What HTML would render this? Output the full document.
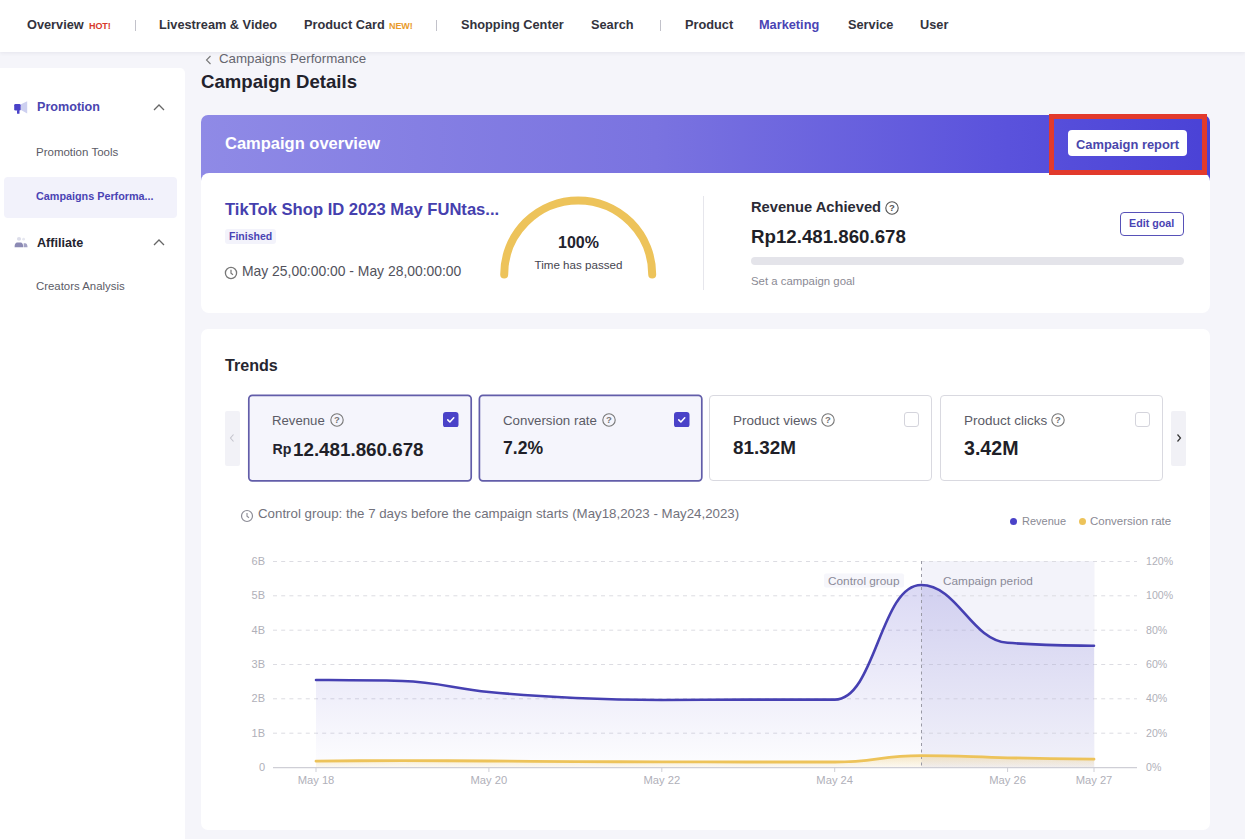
<!DOCTYPE html>
<html>
<head>
<meta charset="utf-8">
<title>Campaign Details</title>
<style>
*{box-sizing:border-box;margin:0;padding:0}
html,body{width:1245px;height:839px;overflow:hidden}
body{background:#f5f5fa;font-family:"Liberation Sans",sans-serif;color:#23232e;position:relative}
.t{position:absolute;white-space:nowrap;line-height:1}
.b{font-weight:700}
.abs{position:absolute}
/* nav */
#nav{position:absolute;left:0;top:0;width:1245px;height:52px;background:#fff;box-shadow:0 1px 4px rgba(40,40,80,.08)}
#nav .t{font-size:12.75px;font-weight:700;color:#33333d;top:19px}
#nav .sep{position:absolute;top:20px;width:1px;height:11px;background:#c2c2ca}
#nav .tag{font-size:9px;top:22px;letter-spacing:-.1px}
/* sidebar */
#side{position:absolute;left:0;top:68px;width:185px;height:771px;background:#fff;border-top-right-radius:5px}
/* cards */
.card{position:absolute;background:#fff;border-radius:7px}
</style>
</head>
<body>

<!-- NAV -->
<div id="nav">
  <div class="t" style="left:27px">Overview</div>
  <div class="t tag" style="left:89px;color:#d8392b">HOT!</div>
  <div class="sep" style="left:135px"></div>
  <div class="t" style="left:159px">Livestream &amp; Video</div>
  <div class="t" style="left:304px">Product Card</div>
  <div class="t tag" style="left:389px;color:#e89a2c">NEW!</div>
  <div class="sep" style="left:436px"></div>
  <div class="t" style="left:461px">Shopping Center</div>
  <div class="t" style="left:591px">Search</div>
  <div class="sep" style="left:660px"></div>
  <div class="t" style="left:685px">Product</div>
  <div class="t" style="left:759px;color:#4a44b4">Marketing</div>
  <div class="t" style="left:848px">Service</div>
  <div class="t" style="left:920px">User</div>
</div>

<!-- SIDEBAR -->
<div id="side">
  <svg class="abs" style="left:14px;top:32.5px" width="14" height="14" viewBox="0 0 14 14">
    <rect x="0.2" y="3" width="6.5" height="6.5" rx="1.3" fill="#4a42c8"/><rect x="3" y="9" width="2.5" height="3.8" rx=".6" fill="#4a42c8"/>
    <path d="M7 3.2L13.2 0.2v12.4L7 9z" fill="#cdd0f0"/>
  </svg>
  <div class="t b" style="left:37px;top:33.4px;font-size:12.6px;color:#4a45b0">Promotion</div>
  <svg class="abs" style="left:153px;top:35.7px" width="12" height="7" viewBox="0 0 12 7"><path d="M1 6L6 1l5 5" fill="none" stroke="#666" stroke-width="1.3"/></svg>
  <div class="t" style="left:36px;top:78.5px;font-size:11.5px;color:#5b5b66">Promotion Tools</div>
  <div class="abs" style="left:4px;top:109px;width:173px;height:41px;background:#f2f2fb;border-radius:4px"></div>
  <div class="t b" style="left:36px;top:122.5px;font-size:10.8px;color:#4a44b4">Campaigns Performa...</div>
  <svg class="abs" style="left:14px;top:167.6px" width="14" height="14" viewBox="0 0 14 14">
    <ellipse cx="5" cy="2.9" rx="2.1" ry="1.8" fill="#dcddea"/><circle cx="9.6" cy="3.2" r="1.4" fill="#e6e7f0"/>
    <path d="M0.6 11.2c0-3 1-4.6 2.6-4.6h3.4c1.6 0 2.6 1.6 2.6 4.6z" fill="#8c8ab4"/>
    <path d="M9.7 11.2V7.3h1.4c1.5 0 2.4 1.3 2.4 3.9z" fill="#a3a2c4"/>
  </svg>
  <div class="t b" style="left:37px;top:169px;font-size:12.6px;color:#23232e">Affiliate</div>
  <svg class="abs" style="left:153px;top:171px" width="12" height="7" viewBox="0 0 12 7"><path d="M1 6L6 1l5 5" fill="none" stroke="#666" stroke-width="1.3"/></svg>
  <div class="t" style="left:36px;top:213px;font-size:11.4px;color:#5b5b66">Creators Analysis</div>
</div>

<!-- HEADER TEXT -->
<svg class="abs" style="left:205px;top:54.5px" width="7" height="10" viewBox="0 0 7 10"><path d="M5.5 1L1.5 5l4 4" fill="none" stroke="#777" stroke-width="1.1"/></svg>
<div class="t" style="left:219px;top:51.5px;font-size:13.3px;color:#66666f">Campaigns Performance</div>
<div class="t b" style="left:201px;top:73.3px;font-size:18.6px;color:#22222c">Campaign Details</div>

<!-- OVERVIEW CARD -->
<div class="abs" style="left:201px;top:114.5px;width:1009px;height:70px;border-radius:7px 7px 0 0;background:linear-gradient(90deg,#8f8ae6 0%,#7a73e0 45%,#5a52dc 80%,#4a42d6 100%)"></div>
<div class="t b" style="left:225px;top:134.5px;font-size:16.5px;color:#fff">Campaign overview</div>
<div class="card" style="left:201px;top:173px;width:1009px;height:140px;border-radius:8px"></div>
<div class="abs" style="left:1068px;top:130px;width:119px;height:26px;background:#fff;border-radius:4px"></div>
<div class="t b" style="left:1076px;top:138.8px;font-size:12.9px;color:#4a46ac">Campaign report</div>
<div class="abs" style="left:1049px;top:114px;width:158px;height:61px;border:5px solid #e23a2c"></div>

<div class="t b" style="left:225px;top:201.5px;font-size:16.6px;color:#4540ae">TikTok Shop ID 2023 May FUNtas...</div>
<div class="abs" style="left:224.6px;top:228.8px;width:51.6px;height:15px;background:#f3f3fb;border-radius:3px"></div>
<div class="t b" style="left:229px;top:231px;font-size:10.5px;color:#4a44b4">Finished</div>
<svg class="abs" style="left:224.4px;top:265.6px" width="14" height="14" viewBox="0 0 14 14"><circle cx="7" cy="7" r="5.6" fill="none" stroke="#777" stroke-width="1.3"/><path d="M7 3.8v3.4l2 1.5" fill="none" stroke="#777" stroke-width="1.2"/></svg>
<div class="t" style="left:242px;top:264.5px;font-size:13.9px;color:#52525c">May 25,00:00:00 - May 28,00:00:00</div>

<svg class="abs" style="left:496px;top:190px" width="166" height="96" viewBox="496 190 166 96"><path d="M504.2 274.5A74 74 0 0 1 652.2 274.5" fill="none" stroke="#edc35a" stroke-width="8" stroke-linecap="round"/></svg>
<div class="t b" style="left:538px;width:81px;text-align:center;top:234.5px;font-size:16px;color:#23232e">100%</div>
<div class="t" style="left:518px;width:121px;text-align:center;top:259px;font-size:11.6px;color:#45454f">Time has passed</div>

<div class="abs" style="left:703px;top:196px;width:1px;height:94px;background:#e6e6ec"></div>

<div class="t b" style="left:751px;top:199.5px;font-size:14.7px;color:#2b2b36">Revenue Achieved</div>
<svg class="abs" style="left:885px;top:201px" width="14" height="14" viewBox="0 0 14 14"><circle cx="7" cy="7" r="6.2" fill="none" stroke="#555" stroke-width="1.1"/><text x="7" y="10.4" text-anchor="middle" font-family="Liberation Sans" font-size="9.5" font-weight="700" fill="#555">?</text></svg>
<div class="t b" style="left:751px;top:227.5px;font-size:18.7px;color:#1f1f28">Rp12.481.860.678</div>
<div class="abs" style="left:1120px;top:211.5px;width:64px;height:24px;border:1.5px solid #5751b8;border-radius:4px;background:#fff"></div>
<div class="t b" style="left:1129px;top:218px;font-size:10.7px;color:#4a44b4">Edit goal</div>
<div class="abs" style="left:751px;top:257.3px;width:433px;height:7.6px;background:#e4e4ea;border-radius:4px"></div>
<div class="t" style="left:751px;top:276px;font-size:11.4px;color:#8a8a94">Set a campaign goal</div>

<!-- TRENDS CARD -->
<div class="card" style="left:201px;top:328.6px;width:1009px;height:501.5px"></div>
<div class="t b" style="left:225px;top:356.6px;font-size:16.1px;color:#262630">Trends</div>
<div class="abs" style="left:225px;top:410.5px;width:14.5px;height:55px;background:#f2f2f7;border-radius:2px"></div>
<svg class="abs" style="left:229px;top:433px" width="6" height="10" viewBox="0 0 6 10"><path d="M4.5 1.5L1.5 5l3 3.5" fill="none" stroke="#c4c4cc" stroke-width="1.1"/></svg>
<div class="abs" style="left:1171px;top:410.5px;width:15px;height:55px;background:#f1f1f6;border-radius:2px"></div>
<svg class="abs" style="left:1176px;top:433px" width="6" height="10" viewBox="0 0 6 10"><path d="M1.5 1.5L4.5 5l-3 3.5" fill="none" stroke="#333" stroke-width="1.2"/></svg>
<svg class="abs" style="left:246px;top:393px" width="228" height="91" viewBox="246 393 228 91"><rect x="248.8" y="395.4" width="222.4" height="85.4" rx="3.5" fill="#f5f5fc" stroke="#625da9" stroke-width="1.7"/></svg>
<svg class="abs" style="left:477px;top:393px" width="228" height="91" viewBox="477 393 228 91"><rect x="479.4" y="395.4" width="222.4" height="85.4" rx="3.5" fill="#f5f5fc" stroke="#625da9" stroke-width="1.7"/></svg>
<div class="abs" style="left:709px;top:395px;width:223px;height:86px;border:1px solid #d9d9e0;border-radius:4px;background:#fff"></div>
<div class="abs" style="left:940px;top:395px;width:223px;height:86px;border:1px solid #d9d9e0;border-radius:4px;background:#fff"></div>
<div class="t" style="left:272px;top:413.5px;font-size:13.2px;color:#5b5b66">Revenue</div><svg class="abs" style="left:330px;top:413px" width="14" height="14" viewBox="0 0 14 14"><circle cx="7" cy="7" r="6.2" fill="none" stroke="#777" stroke-width="1.1"/><text x="7" y="10.4" text-anchor="middle" font-family="Liberation Sans" font-size="9.5" font-weight="700" fill="#777">?</text></svg>
<div class="t" style="left:503px;top:413.5px;font-size:13.3px;color:#5b5b66">Conversion rate</div><svg class="abs" style="left:602px;top:413px" width="14" height="14" viewBox="0 0 14 14"><circle cx="7" cy="7" r="6.2" fill="none" stroke="#777" stroke-width="1.1"/><text x="7" y="10.4" text-anchor="middle" font-family="Liberation Sans" font-size="9.5" font-weight="700" fill="#777">?</text></svg>
<div class="t" style="left:733px;top:413.5px;font-size:13.5px;color:#5b5b66">Product views</div><svg class="abs" style="left:821px;top:413px" width="14" height="14" viewBox="0 0 14 14"><circle cx="7" cy="7" r="6.2" fill="none" stroke="#777" stroke-width="1.1"/><text x="7" y="10.4" text-anchor="middle" font-family="Liberation Sans" font-size="9.5" font-weight="700" fill="#777">?</text></svg>
<div class="t" style="left:964px;top:413.5px;font-size:13.5px;color:#5b5b66">Product clicks</div><svg class="abs" style="left:1051px;top:413px" width="14" height="14" viewBox="0 0 14 14"><circle cx="7" cy="7" r="6.2" fill="none" stroke="#777" stroke-width="1.1"/><text x="7" y="10.4" text-anchor="middle" font-family="Liberation Sans" font-size="9.5" font-weight="700" fill="#777">?</text></svg>
<svg class="abs" style="left:443.3px;top:411.5px" width="15.5" height="15.5" viewBox="0 0 16 16"><rect x="0" y="0" width="16" height="16" rx="3" fill="#4a42c8"/><path d="M4.9 8.1l2.2 2.2 4-4.4" fill="none" stroke="#fff" stroke-width="1.6" stroke-linecap="round" stroke-linejoin="round"/></svg><svg class="abs" style="left:674.3px;top:411.5px" width="15.5" height="15.5" viewBox="0 0 16 16"><rect x="0" y="0" width="16" height="16" rx="3" fill="#4a42c8"/><path d="M4.9 8.1l2.2 2.2 4-4.4" fill="none" stroke="#fff" stroke-width="1.6" stroke-linecap="round" stroke-linejoin="round"/></svg><div class="abs" style="left:904px;top:412px;width:15px;height:15px;border:1px solid #d4d4dc;border-radius:3px;background:#fff"></div><div class="abs" style="left:1135px;top:412px;width:15px;height:15px;border:1px solid #d4d4dc;border-radius:3px;background:#fff"></div>
<div class="t b" style="left:272.5px;top:441.6px;font-size:14.2px;color:#23232e">Rp</div>
<div class="t b" style="left:293px;top:440.7px;font-size:18.8px;color:#1f1f28">12.481.860.678</div>
<div class="t b" style="left:503px;top:440.3px;font-size:17.6px;color:#1f1f28">7.2%</div>
<div class="t b" style="left:733px;top:439px;font-size:18.9px;color:#1f1f28">81.32M</div>
<div class="t b" style="left:964px;top:439px;font-size:19.6px;color:#1f1f28">3.42M</div>
<svg class="abs" style="left:239.6px;top:508.6px" width="14" height="14" viewBox="0 0 14 14"><circle cx="7" cy="7" r="5.5" fill="none" stroke="#8c8c96" stroke-width="1.2"/><path d="M7 3.9v3.3l2 1.5" fill="none" stroke="#8c8c96" stroke-width="1.1"/></svg>
<div class="t" style="left:258px;top:506.5px;font-size:13.3px;color:#72727c">Control group: the 7 days before the campaign starts (May18,2023 - May24,2023)</div>
<div class="abs" style="left:1010.2px;top:517.5px;width:7px;height:7px;border-radius:50%;background:#4a42c8"></div>
<div class="t" style="left:1022px;top:515.5px;font-size:11px;color:#8a8a94">Revenue</div>
<div class="abs" style="left:1078.6px;top:517.5px;width:7px;height:7px;border-radius:50%;background:#edc35a"></div>
<div class="t" style="left:1090px;top:515.5px;font-size:11.5px;color:#8a8a94">Conversion rate</div>
<!-- CHART-START -->
<svg class="abs" style="left:201px;top:540px" width="1009" height="290" viewBox="201 540 1009 290" font-family="Liberation Sans, sans-serif">
<defs><linearGradient id="gp" x1="0" y1="0" x2="0" y2="1" gradientUnits="userSpaceOnUse" gradientTransform="translate(0,585) scale(1,182)"><stop offset="0" stop-color="#4a42c8" stop-opacity=".2"/><stop offset="1" stop-color="#4a42c8" stop-opacity="0.01"/></linearGradient>
<linearGradient id="gy" x1="0" y1="0" x2="0" y2="1"><stop offset="0" stop-color="#edc35a" stop-opacity=".35"/><stop offset="1" stop-color="#edc35a" stop-opacity=".08"/></linearGradient></defs>
<rect x="921.5" y="561" width="173" height="206" fill="#f3f3fa"/>
<path d="M273 561.5H1137" stroke="#dcdce2" stroke-width="1" stroke-dasharray="4 4.2" fill="none"/>
<path d="M273 595.8H1137" stroke="#dcdce2" stroke-width="1" stroke-dasharray="4 4.2" fill="none"/>
<path d="M273 630.2H1137" stroke="#dcdce2" stroke-width="1" stroke-dasharray="4 4.2" fill="none"/>
<path d="M273 664.5H1137" stroke="#dcdce2" stroke-width="1" stroke-dasharray="4 4.2" fill="none"/>
<path d="M273 698.8H1137" stroke="#dcdce2" stroke-width="1" stroke-dasharray="4 4.2" fill="none"/>
<path d="M273 733.2H1137" stroke="#dcdce2" stroke-width="1" stroke-dasharray="4 4.2" fill="none"/>
<path d="M273 767.7H1137" stroke="#cfcfd6" stroke-width="1.2" fill="none"/>
<path d="M316.0 767V772" stroke="#cfcfd6" stroke-width="1"/>
<path d="M488.9 767V772" stroke="#cfcfd6" stroke-width="1"/>
<path d="M661.8 767V772" stroke="#cfcfd6" stroke-width="1"/>
<path d="M834.7 767V772" stroke="#cfcfd6" stroke-width="1"/>
<path d="M1007.6 767V772" stroke="#cfcfd6" stroke-width="1"/>
<path d="M1094.0 767V772" stroke="#cfcfd6" stroke-width="1"/>
<path d="M316.0 680.0C350.6 680.2 367.9 680.2 402.4 681.0C437.0 681.8 454.3 688.6 488.9 692.0C523.5 695.4 540.8 696.4 575.3 698.0C609.9 699.6 627.2 700.0 661.8 700.0C696.4 700.0 713.6 699.6 748.2 699.6C782.8 699.6 800.1 699.6 834.7 699.6C875.3 699.6 880.5 585.0 921.1 585.0C957.4 585.0 971.2 640.3 1007.6 642.8C1042.1 645.2 1059.4 645.2 1094.0 645.8L1094 767L316 767Z" fill="url(#gp)"/>
<path d="M316.0 761.2C350.6 760.8 367.9 760.6 402.4 760.6C437.0 760.6 454.3 760.8 488.9 761.0C523.5 761.2 540.8 761.6 575.3 761.7C609.9 761.8 627.2 761.7 661.8 761.8C696.4 761.9 713.6 762.0 748.2 762.0C782.8 762.0 800.1 762.0 834.7 762.0C875.3 762.0 880.5 755.6 921.1 755.6C957.4 755.6 971.2 757.0 1007.6 757.8C1042.1 758.5 1059.4 758.7 1094.0 759.2L1094 767L316 767Z" fill="url(#gy)"/>
<path d="M921.5 561V767" stroke="#9a9aa6" stroke-width="1" stroke-dasharray="3 3.5"/>
<path d="M316.0 680.0C350.6 680.2 367.9 680.2 402.4 681.0C437.0 681.8 454.3 688.6 488.9 692.0C523.5 695.4 540.8 696.4 575.3 698.0C609.9 699.6 627.2 700.0 661.8 700.0C696.4 700.0 713.6 699.6 748.2 699.6C782.8 699.6 800.1 699.6 834.7 699.6C875.3 699.6 880.5 585.0 921.1 585.0C957.4 585.0 971.2 640.3 1007.6 642.8C1042.1 645.2 1059.4 645.2 1094.0 645.8" fill="none" stroke="#4640b2" stroke-width="2.6" stroke-linecap="round"/>
<path d="M316.0 761.2C350.6 760.8 367.9 760.6 402.4 760.6C437.0 760.6 454.3 760.8 488.9 761.0C523.5 761.2 540.8 761.6 575.3 761.7C609.9 761.8 627.2 761.7 661.8 761.8C696.4 761.9 713.6 762.0 748.2 762.0C782.8 762.0 800.1 762.0 834.7 762.0C875.3 762.0 880.5 755.6 921.1 755.6C957.4 755.6 971.2 757.0 1007.6 757.8C1042.1 758.5 1059.4 758.7 1094.0 759.2" fill="none" stroke="#edc35a" stroke-width="2.8" stroke-linecap="round"/>
<text x="265" y="564.8" text-anchor="end" font-size="11" fill="#b0b0b9">6B</text>
<text x="265" y="599.1" text-anchor="end" font-size="11" fill="#b0b0b9">5B</text>
<text x="265" y="633.5" text-anchor="end" font-size="11" fill="#b0b0b9">4B</text>
<text x="265" y="667.8" text-anchor="end" font-size="11" fill="#b0b0b9">3B</text>
<text x="265" y="702.1" text-anchor="end" font-size="11" fill="#b0b0b9">2B</text>
<text x="265" y="736.5" text-anchor="end" font-size="11" fill="#b0b0b9">1B</text>
<text x="265" y="770.8" text-anchor="end" font-size="11" fill="#b0b0b9">0</text>
<text x="1146" y="564.8" font-size="10.6" fill="#b0b0b9">120%</text>
<text x="1146" y="599.1" font-size="10.6" fill="#b0b0b9">100%</text>
<text x="1146" y="633.5" font-size="10.6" fill="#b0b0b9">80%</text>
<text x="1146" y="667.8" font-size="10.6" fill="#b0b0b9">60%</text>
<text x="1146" y="702.1" font-size="10.6" fill="#b0b0b9">40%</text>
<text x="1146" y="736.5" font-size="10.6" fill="#b0b0b9">20%</text>
<text x="1146" y="770.8" font-size="10.6" fill="#b0b0b9">0%</text>
<text x="316.0" y="784.1" text-anchor="middle" font-size="11.2" fill="#b0b0b9">May 18</text>
<text x="488.9" y="784.1" text-anchor="middle" font-size="11.2" fill="#b0b0b9">May 20</text>
<text x="661.8" y="784.1" text-anchor="middle" font-size="11.2" fill="#b0b0b9">May 22</text>
<text x="834.7" y="784.1" text-anchor="middle" font-size="11.2" fill="#b0b0b9">May 24</text>
<text x="1007.6" y="784.1" text-anchor="middle" font-size="11.2" fill="#b0b0b9">May 26</text>
<text x="1094.0" y="784.1" text-anchor="middle" font-size="11.2" fill="#b0b0b9">May 27</text>
<rect x="824" y="573.5" width="80" height="14" rx="2" fill="#f6f6fb"/>
<text x="828" y="584.5" font-size="11.8" fill="#8a8a98">Control group</text>
<text x="943" y="584.5" font-size="11.8" fill="#8a8a98">Campaign period</text>
</svg>
<!-- CHART-END -->

</body>
</html>
